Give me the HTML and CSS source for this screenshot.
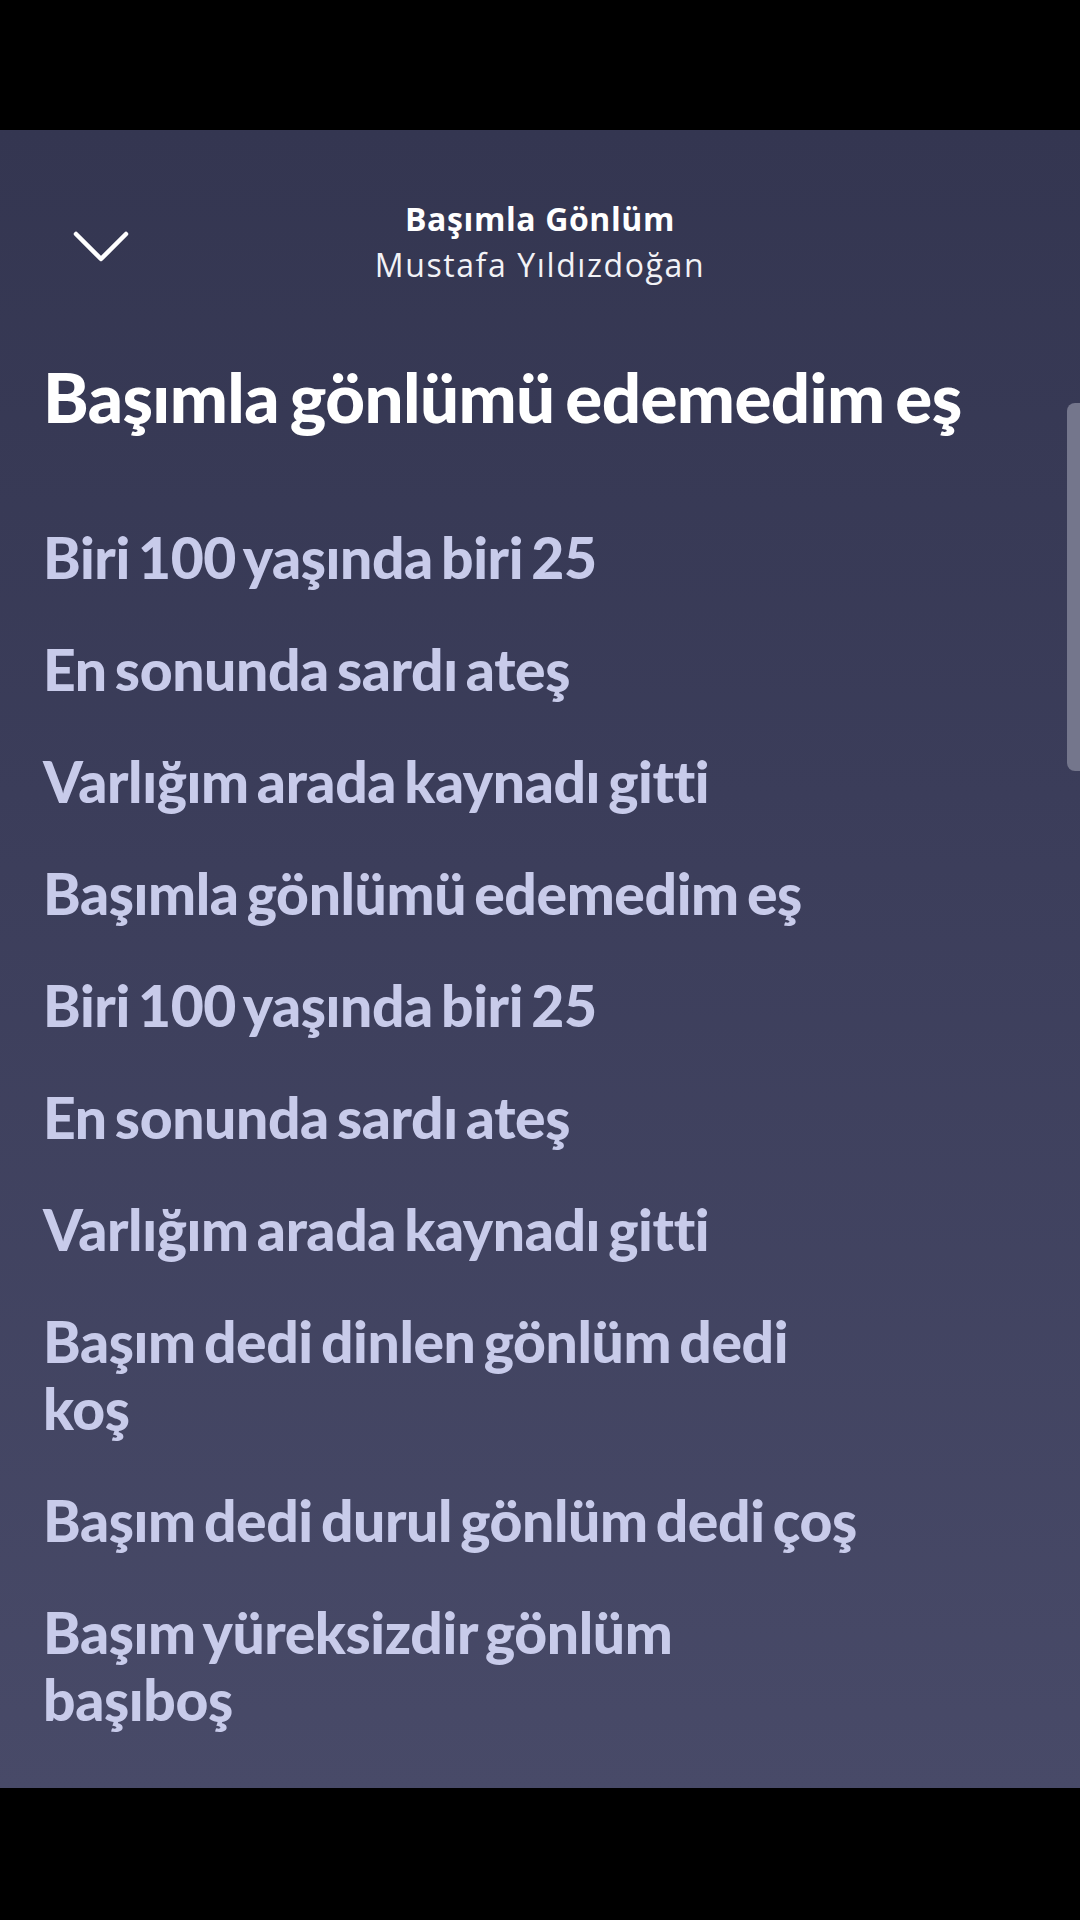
FILE: index.html
```html
<!DOCTYPE html>
<html lang="tr">
<head>
<meta charset="utf-8">
<title>Başımla Gönlüm – Şarkı sözleri</title>
<link rel="stylesheet" href="styles.css">
</head>
<body>
<div class="screen">
  <div class="bar-top"></div>
  <main class="player">
    <header class="header">
      <button class="back" aria-label="Kapat">
        <svg width="56" height="31" viewBox="0 0 56 31" aria-hidden="true">
          <path d="M3 3 L28 28 L53 3" fill="none" stroke="#ffffff" stroke-width="4.5" stroke-linecap="round" stroke-linejoin="round"/>
        </svg>
      </button>
      <div class="track">
        <div class="track-title">Başımla Gönlüm</div>
        <div class="track-artist">Mustafa Yıldızdoğan</div>
      </div>
      <div class="spacer"></div>
    </header>
    <section class="lyrics">
      <p class="line active">Başımla gönlümü edemedim eş</p>
      <p class="line">Biri 100 yaşında biri 25</p>
      <p class="line">En sonunda sardı ateş</p>
      <p class="line">Varlığım arada kaynadı gitti</p>
      <p class="line">Başımla gönlümü edemedim eş</p>
      <p class="line">Biri 100 yaşında biri 25</p>
      <p class="line">En sonunda sardı ateş</p>
      <p class="line">Varlığım arada kaynadı gitti</p>
      <p class="line">Başım dedi dinlen gönlüm dedi<br>koş</p>
      <p class="line">Başım dedi durul gönlüm dedi çoş</p>
      <p class="line">Başım yüreksizdir gönlüm<br>başıboş</p>
    </section>
    <div class="scrollbar"></div>
  </main>
  <div class="bar-bottom"></div>
</div>
</body>
</html>
```
FILE: styles.css
```css
html, body {
  margin: 0;
  padding: 0;
  background: #000;
}

.screen {
  width: 1080px;
  height: 1920px;
  display: flex;
  flex-direction: column;
  overflow: hidden;
  background: #000;
}

.bar-top {
  height: 130px;
  flex: none;
  background: #000;
}

.bar-bottom {
  height: 132px;
  flex: none;
  background: #000;
}

.player {
  position: relative;
  flex: none;
  height: 1658px;
  overflow: hidden;
  background: linear-gradient(180deg, #343651 0%, #3b3d5a 40%, #484a68 100%);
  display: flex;
  flex-direction: column;
}

.header {
  display: grid;
  grid-template-columns: 1fr auto 1fr;
  align-items: center;
  padding-top: 69px;
}

.back {
  justify-self: start;
  margin-left: 73px;
  margin-top: 8px;
  padding: 0;
  border: 0;
  background: none;
  display: flex;
  line-height: 0;
}

.track {
  text-align: center;
  color: #ffffff;
  display: flex;
  flex-direction: column;
  gap: 6px;
}

.track-title {
  font-family: "Open Sans", "Liberation Sans", sans-serif;
  font-weight: 700;
  font-size: 32px;
  line-height: 40px;
  letter-spacing: 0.6px;
}

.track-artist {
  font-family: "Open Sans", "Liberation Sans", sans-serif;
  font-weight: 400;
  font-size: 32px;
  line-height: 40px;
  letter-spacing: 1.6px;
  color: #f2f2f6;
}

.lyrics {
  padding: 70px 150px 0 43px;
  display: flex;
  flex-direction: column;
}

.line {
  margin: 0 0 45px 0;
  font-family: Lato, "Liberation Sans", sans-serif;
  font-weight: 900;
  font-size: 57px;
  line-height: 67px;
  letter-spacing: -0.4px;
  word-spacing: -5px;
  color: #c8cbea;
}

.line.active {
  font-size: 69px;
  line-height: 83px;
  letter-spacing: -0.6px;
  color: #ffffff;
  white-space: nowrap;
  margin-bottom: 86px;
}

.scrollbar {
  position: absolute;
  right: 0;
  top: 273px;
  width: 13px;
  height: 368px;
  border-radius: 8px 0 0 8px;
  background: #74768c;
}
```
